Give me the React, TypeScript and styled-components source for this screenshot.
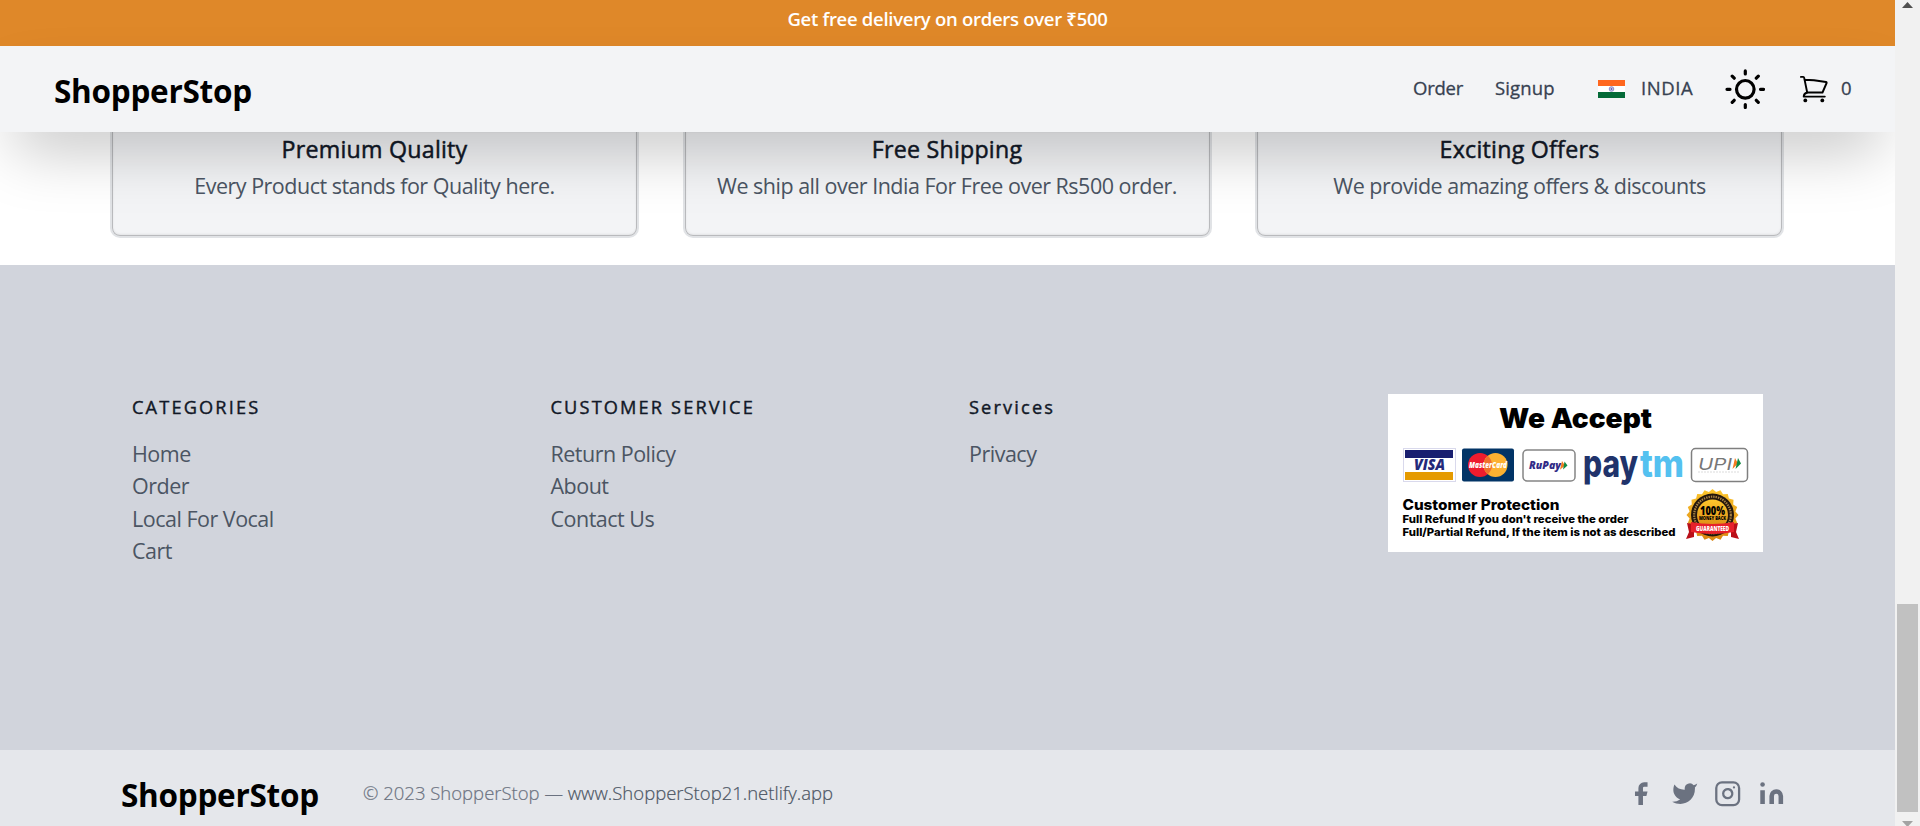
import React from "react";
import styled, { createGlobalStyle } from "styled-components";

const Global = createGlobalStyle`
  * { box-sizing: border-box; }
  html, body { margin: 0; padding: 0; overflow: hidden; }
  body { font-family: "Open Sans", "Noto Sans", sans-serif; background: #fff; }
  h2, p, ul { margin: 0; padding: 0; }
  ul { list-style: none; }
  a { color: inherit; text-decoration: none; }
  svg { display: block; flex: none; }
`;

const Window = styled.div`
  display: flex;
  width: 1920px;
  height: 826px;
  overflow: hidden;
`;

const Page = styled.div`
  width: 1895px;
  height: 826px;
  display: flex;
  flex-direction: column;
  overflow: hidden;
  background: #fff;
`;

const Banner = styled.p`
  flex: none;
  height: 46px;
  padding-top: 6px;
  background: #df8829;
  color: #fff;
  text-align: center;
  font-size: 18.5px;
  font-weight: 600;
  line-height: 26px;
`;

const Nav = styled.nav`
  flex: none;
  position: relative;
  z-index: 1;
  height: 86px;
  padding: 0 43px 0 54px;
  display: flex;
  align-items: center;
  justify-content: space-between;
  background: #f3f4f6;
  box-shadow: 0 31px 62px -15px rgba(0, 0, 0, 0.25);
`;

const Spaced = styled.span<{ $track?: number }>`
  letter-spacing: ${(p) => p.$track ?? 0}px;
`;

const Brand = styled.a`
  color: #000;
  font-size: 31.5px;
  font-weight: 700;
  line-height: 40px;
  white-space: nowrap;
`;

const NavBrand = styled(Brand)`
  margin-top: 4px;
`;

const NavItems = styled.div`
  display: flex;
  align-items: center;
  height: 100%;
  color: #374151;
  font-size: 18.5px;
  line-height: 24px;
  -webkit-text-stroke: 0.3px currentColor;
`;

const NavItem = styled.a<{ $width: number }>`
  width: ${(p) => p.$width}px;
  flex: none;
  white-space: nowrap;
  display: flex;
  align-items: center;
`;

const NavText = styled(NavItem)`
  padding-bottom: 2px;
`;

const Features = styled.section`
  flex: none;
  height: 133px;
  padding: 0 111px 0 110px;
  display: grid;
  grid-template-columns: repeat(3, 529px);
  justify-content: space-between;
  align-items: start;
`;

const Card = styled.article`
  height: 106px;
  border: 2px solid #e1e3e6;
  border-top: 0;
  border-radius: 0 0 10px 10px;
  background: #f3f4f6;
  box-shadow: inset 0 -1px 0 0 #b9babd, inset 1px 0 0 0 #b9babd, inset -1px 0 0 0 #b9babd, inset 0 -1px 3px 0 rgba(0, 0, 0, 0.14);
  text-align: center;
`;

const CardTitle = styled.h2`
  color: #111827;
  font-size: 23.2px;
  font-weight: 400;
  line-height: 35px;
  -webkit-text-stroke: 0.5px currentColor;
`;

const CardText = styled.p`
  padding-top: 1px;
  color: #4b5563;
  font-size: 21.5px;
  line-height: 35px;
  white-space: nowrap;
`;

const Footer = styled.footer`
  flex: none;
  height: 485px;
  padding: 129px 132px 0;
  display: grid;
  grid-template-columns: 418.5px 418.5px 419px 375px;
  align-items: start;
  background: #d1d4dc;
`;

const ColumnTitle = styled.h2`
  color: #111827;
  font-size: 18.2px;
  font-weight: 400;
  line-height: 26px;
  margin-bottom: 18px;
  white-space: nowrap;
  -webkit-text-stroke: 0.4px currentColor;
`;

const Link = styled.li`
  color: #4b5563;
  font-size: 21.5px;
  line-height: 32.4px;
  white-space: nowrap;
`;

const Bottom = styled.div`
  flex: none;
  height: 76px;
  padding: 0 110px 0 121px;
  display: flex;
  align-items: flex-start;
  background: #e5e7eb;
`;

const BottomBrand = styled(Brand)`
  width: 242px;
  padding-top: 25px;
`;

const Copyright = styled.p`
  flex: 1;
  padding-top: 30px;
  color: #6b7280;
  font-size: 18.5px;
  font-weight: 300;
  line-height: 25px;
  -webkit-text-stroke: 0.2px currentColor;
  a { color: #4b5563; }
`;

const Social = styled.div`
  display: flex;
  gap: 16px;
  padding-top: 30px;
  color: #6b7280;
`;

const Scrollbar = styled.aside`
  width: 25px;
  height: 826px;
  padding: 1px 2px 0;
  display: flex;
  flex-direction: column;
  align-items: center;
  background: #f1f1f1;
`;

const Thumb = styled.div`
  flex: none;
  width: 21px;
  height: 208px;
  margin-top: 595px;
  margin-bottom: 9px;
  background: #c1c1c1;
`;

const Flag = () => (
  <svg width="27" height="18" viewBox="0 0 27 18">
    <rect width="27" height="18" fill="#fff" />
    <rect width="27" height="6" fill="#ff671f" />
    <rect y="12" width="27" height="6" fill="#046a38" />
    <circle cx="13.5" cy="9" r="2.3" fill="#c9c7e8" stroke="#7773bd" strokeWidth=".8" />
    <circle cx="13.5" cy="9" r=".8" fill="#3b379b" />
  </svg>
);

const Sun = () => (
  <svg width="40" height="40" viewBox="0 0 40 40" fill="none" stroke="#000" strokeWidth="3.2" strokeLinecap="round">
    <circle cx="20.3" cy="20.3" r="8.8" />
    <path d="M20.3 1.9v3M20.3 35.5v3M2 20.3h3M35.5 20.3h3M7.2 7.2l2 2M31.3 31.3l2 2M33.3 7.2l-2 2M9.2 31.3l-2 2" />
  </svg>
);

const CartIcon = () => (
  <svg width="30" height="28" viewBox="0 0 30 28" fill="none" stroke="#000" strokeWidth="1.9" strokeLinecap="round" strokeLinejoin="round">
    <path d="M.9 1.9h2.3q.8 0 1 1L7.2 17.5h15.3L26.6 8q.2-.8-.6-1L14 5.2 4.4 4.800" />
    <path d="M7.2 17.5Q3.8 18.5 3.7 21.6H24.8" />
    <circle cx="5.3" cy="25.4" r="1.9" fill="#000" stroke="none" />
    <circle cx="22.3" cy="25.4" r="1.9" fill="#000" stroke="none" />
  </svg>
);

const SocialSvg = styled.svg`
  width: 27.4px;
  height: 27.4px;
  overflow: visible;
`;

const Facebook = () => (
  <SocialSvg viewBox="0 0 24 24" fill="currentColor">
    <path d="M18 2h-3a5 5 0 00-5 5v3H7v4h3v8h4v-8h3l1-4h-4V7a1 1 0 011-1h3z" />
  </SocialSvg>
);

const Twitter = () => (
  <SocialSvg viewBox="0 0 24 24" fill="currentColor">
    <path d="M23 3a10.9 10.9 0 01-3.14 1.53 4.48 4.48 0 00-7.86 3v1A10.66 10.66 0 013 4s-4 9 5 13a11.64 11.64 0 01-7 2c9 5 20 0 20-11.5a4.5 4.5 0 00-.08-.83A7.72 7.72 0 0023 3z" />
  </SocialSvg>
);

const Instagram = () => (
  <SocialSvg viewBox="0 0 24 24" fill="none" stroke="currentColor" strokeWidth="2" strokeLinecap="round" strokeLinejoin="round">
    <rect width="20" height="20" x="2" y="2" rx="5" />
    <path d="M16 11.37A4 4 0 1112.63 8 4 4 0 0116 11.37zm1.5-4.87h.01" />
  </SocialSvg>
);

const LinkedIn = () => (
  <SocialSvg viewBox="0 0 24 24" fill="currentColor">
    <path d="M16 8a6 6 0 016 6v7h-4v-7a2 2 0 00-2-2 2 2 0 00-2 2v7h-4v-7a6 6 0 016-6zM2 9h4v12H2z" />
    <circle cx="4" cy="4" r="2" />
  </SocialSvg>
);

const sealPoints = Array.from({ length: 40 }, (_, i) => {
  const r = i % 2 ? 23.2 : 26;
  const a = (i * Math.PI) / 20;
  return `${(324.5 + r * Math.sin(a)).toFixed(1)},${(121 - r * Math.cos(a)).toFixed(1)}`;
}).join(" ");

const Payments = () => (
  <svg width="375" height="158" viewBox="0 0 375 158" fontFamily="Inter, sans-serif">
    <defs>
      <linearGradient id="gold" x1="0" y1="0" x2="0" y2="1">
        <stop offset="0" stopColor="#fdc62c" />
        <stop offset="1" stopColor="#d98512" />
      </linearGradient>
    </defs>
    <rect width="375" height="158" fill="#fff" />
    <text x="111" y="34.3" fontSize="27" fontWeight="900" textLength="153" lengthAdjust="spacingAndGlyphs">We Accept</text>

    <rect x="15.5" y="54.5" width="52" height="33" fill="#fff" stroke="#d9d9ec" />
    <rect x="17" y="56" width="48" height="8" fill="#191f70" />
    <rect x="17" y="78" width="48" height="8" fill="#e59a00" />
    <text x="26" y="76.3" fontFamily="Open Sans" fontSize="15" fontWeight="800" fontStyle="italic" fill="#23297a" textLength="31" lengthAdjust="spacingAndGlyphs">VISA</text>

    <rect x="74" y="54.5" width="52" height="33" rx="2" fill="#023466" />
    <circle cx="92" cy="71" r="12" fill="#ee1c2e" />
    <circle cx="107.5" cy="71" r="12" fill="#fcb131" />
    <path d="M99.8 61.8a12 12 0 0 1 0 18.4a12 12 0 0 1 0-18.4z" fill="#f0702c" />
    <text x="81" y="74" fontFamily="Open Sans" fontSize="8" fontWeight="800" fontStyle="italic" fill="#fff" textLength="38" lengthAdjust="spacingAndGlyphs">MasterCard</text>

    <rect x="135" y="56" width="52" height="31" rx="4" fill="#fff" stroke="#858585" strokeWidth="1.5" />
    <text x="141" y="75" fontFamily="Open Sans" fontSize="10.5" fontWeight="800" fontStyle="italic" fill="#322a86" textLength="32" lengthAdjust="spacingAndGlyphs">RuPay</text>
    <path d="M174 67l3 4.4-5 4.4z" fill="#f47b20" />
    <path d="M176.5 67.5l3 4-4.5 4z" fill="#128a43" />

    <text x="195" y="82.5" fontSize="38" fontWeight="800" fill="#20336b" textLength="55" lengthAdjust="spacingAndGlyphs">pay</text>
    <text x="252" y="82.5" fontSize="38" fontWeight="800" fill="#54c1f0" textLength="44" lengthAdjust="spacingAndGlyphs">tm</text>

    <rect x="303.5" y="54.5" width="56" height="33" rx="4" fill="#fff" stroke="#7f7f7f" strokeWidth="1.5" />
    <text x="310" y="75.5" fontSize="16.5" fontWeight="400" fontStyle="italic" fill="#777" textLength="34" lengthAdjust="spacingAndGlyphs">UPI</text>
    <path d="M347 64l3 5.5-5.5 5.5z" fill="#f47b20" />
    <path d="M350 64l3 5.5-5.5 5.5z" fill="#128a43" />
    <path d="M310 78h41" stroke="#ccc" strokeWidth=".7" strokeDasharray="2 1" />

    <text x="14.5" y="115.5" fontSize="14.5" fontWeight="800" textLength="157" lengthAdjust="spacingAndGlyphs">Customer Protection</text>
    <text x="14.5" y="128.7" fontSize="10.8" fontWeight="800" textLength="226" lengthAdjust="spacingAndGlyphs">Full Refund If you don't receive the order</text>
    <text x="14.5" y="142" fontSize="10.8" fontWeight="800" textLength="273" lengthAdjust="spacingAndGlyphs">Full/Partial Refund, If the item is not as described</text>

    <polygon points={sealPoints} fill="url(#gold)" />
    <circle cx="324.5" cy="121" r="21.5" fill="#24170c" />
    <circle cx="324.5" cy="121" r="18.3" fill="none" stroke="#a98343" strokeWidth="2.2" strokeDasharray="1.4 1" />
    <circle cx="324.5" cy="121" r="15.5" fill="url(#gold)" />
    <text x="324.5" y="121" textAnchor="middle" fontFamily="Open Sans" fontSize="11.5" fontWeight="800" textLength="25" lengthAdjust="spacingAndGlyphs">100%</text>
    <text x="324.5" y="126" textAnchor="middle" fontFamily="Open Sans" fontSize="4.5" fontWeight="800" textLength="27" lengthAdjust="spacingAndGlyphs">MONEY BACK</text>
    <path d="M299 129l7 1v13l-8 2 3-7zM350 129l-7 1v13l8 2-3-7z" fill="#b90f18" />
    <path d="M303 128q21.5 4 43 0v10q-21.5 4-43 0z" fill="#e7212a" />
    <text x="324.5" y="136.8" textAnchor="middle" fontFamily="Open Sans" fontSize="6" fontWeight="800" fill="#fff" textLength="33" lengthAdjust="spacingAndGlyphs">GUARANTEED</text>
  </svg>
);

const features = [
  { title: "Premium Quality", text: "Every Product stands for Quality here." },
  { title: "Free Shipping", text: "We ship all over India For Free over Rs500 order." },
  { title: "Exciting Offers", text: "We provide amazing offers & discounts" },
];

const columns = [
  { title: "CATEGORIES", links: ["Home", "Order", "Local For Vocal", "Cart"] },
  { title: "CUSTOMER SERVICE", links: ["Return Policy", "About", "Contact Us"] },
  { title: "Services", links: ["Privacy"] },
];

export default function App() {
  return (
    <Window>
      <Global />
      <Page>
        <Banner><Spaced $track={-0.29}>Get free delivery on orders over ₹500</Spaced></Banner>
        <Nav>
          <NavBrand><Spaced $track={-0.27}>ShopperStop</Spaced></NavBrand>
          <NavItems>
            <NavText $width={82}><Spaced $track={-0.25}>Order</Spaced></NavText>
            <NavText $width={103}><Spaced $track={0.15}>Signup</Spaced></NavText>
            <NavItem $width={43}><Flag /></NavItem>
            <NavText $width={84}><Spaced $track={0.55}>INDIA</Spaced></NavText>
            <NavItem $width={75}><Sun /></NavItem>
            <NavItem $width={41}><CartIcon /></NavItem>
            <NavText $width={11}>0</NavText>
          </NavItems>
        </Nav>
        <Features>
          {features.map((f) => (
            <Card key={f.title}>
              <CardTitle><Spaced $track={0.25}>{f.title}</Spaced></CardTitle>
              <CardText><Spaced $track={-0.5}>{f.text}</Spaced></CardText>
            </Card>
          ))}
        </Features>
        <Footer>
          {columns.map((c) => (
            <section key={c.title}>
              <ColumnTitle><Spaced $track={2.15}>{c.title}</Spaced></ColumnTitle>
              <ul>{c.links.map((l) => <Link key={l}><Spaced $track={-0.5}>{l}</Spaced></Link>)}</ul>
            </section>
          ))}
          <Payments />
        </Footer>
        <Bottom>
          <BottomBrand><Spaced $track={-0.27}>ShopperStop</Spaced></BottomBrand>
          <Copyright>© 2023 ShopperStop — <a>www.ShopperStop21.netlify.app</a></Copyright>
          <Social><Facebook /><Twitter /><Instagram /><LinkedIn /></Social>
        </Bottom>
      </Page>
      <Scrollbar>
        <svg width="11" height="8" viewBox="0 0 11 8"><path d="M0 7h11L5.5 1z" fill="#505050" /></svg>
        <Thumb />
        <svg width="11" height="6" viewBox="0 0 11 6"><path d="M0 0h11L5.5 6z" fill="#a3a3a3" /></svg>
      </Scrollbar>
    </Window>
  );
}
